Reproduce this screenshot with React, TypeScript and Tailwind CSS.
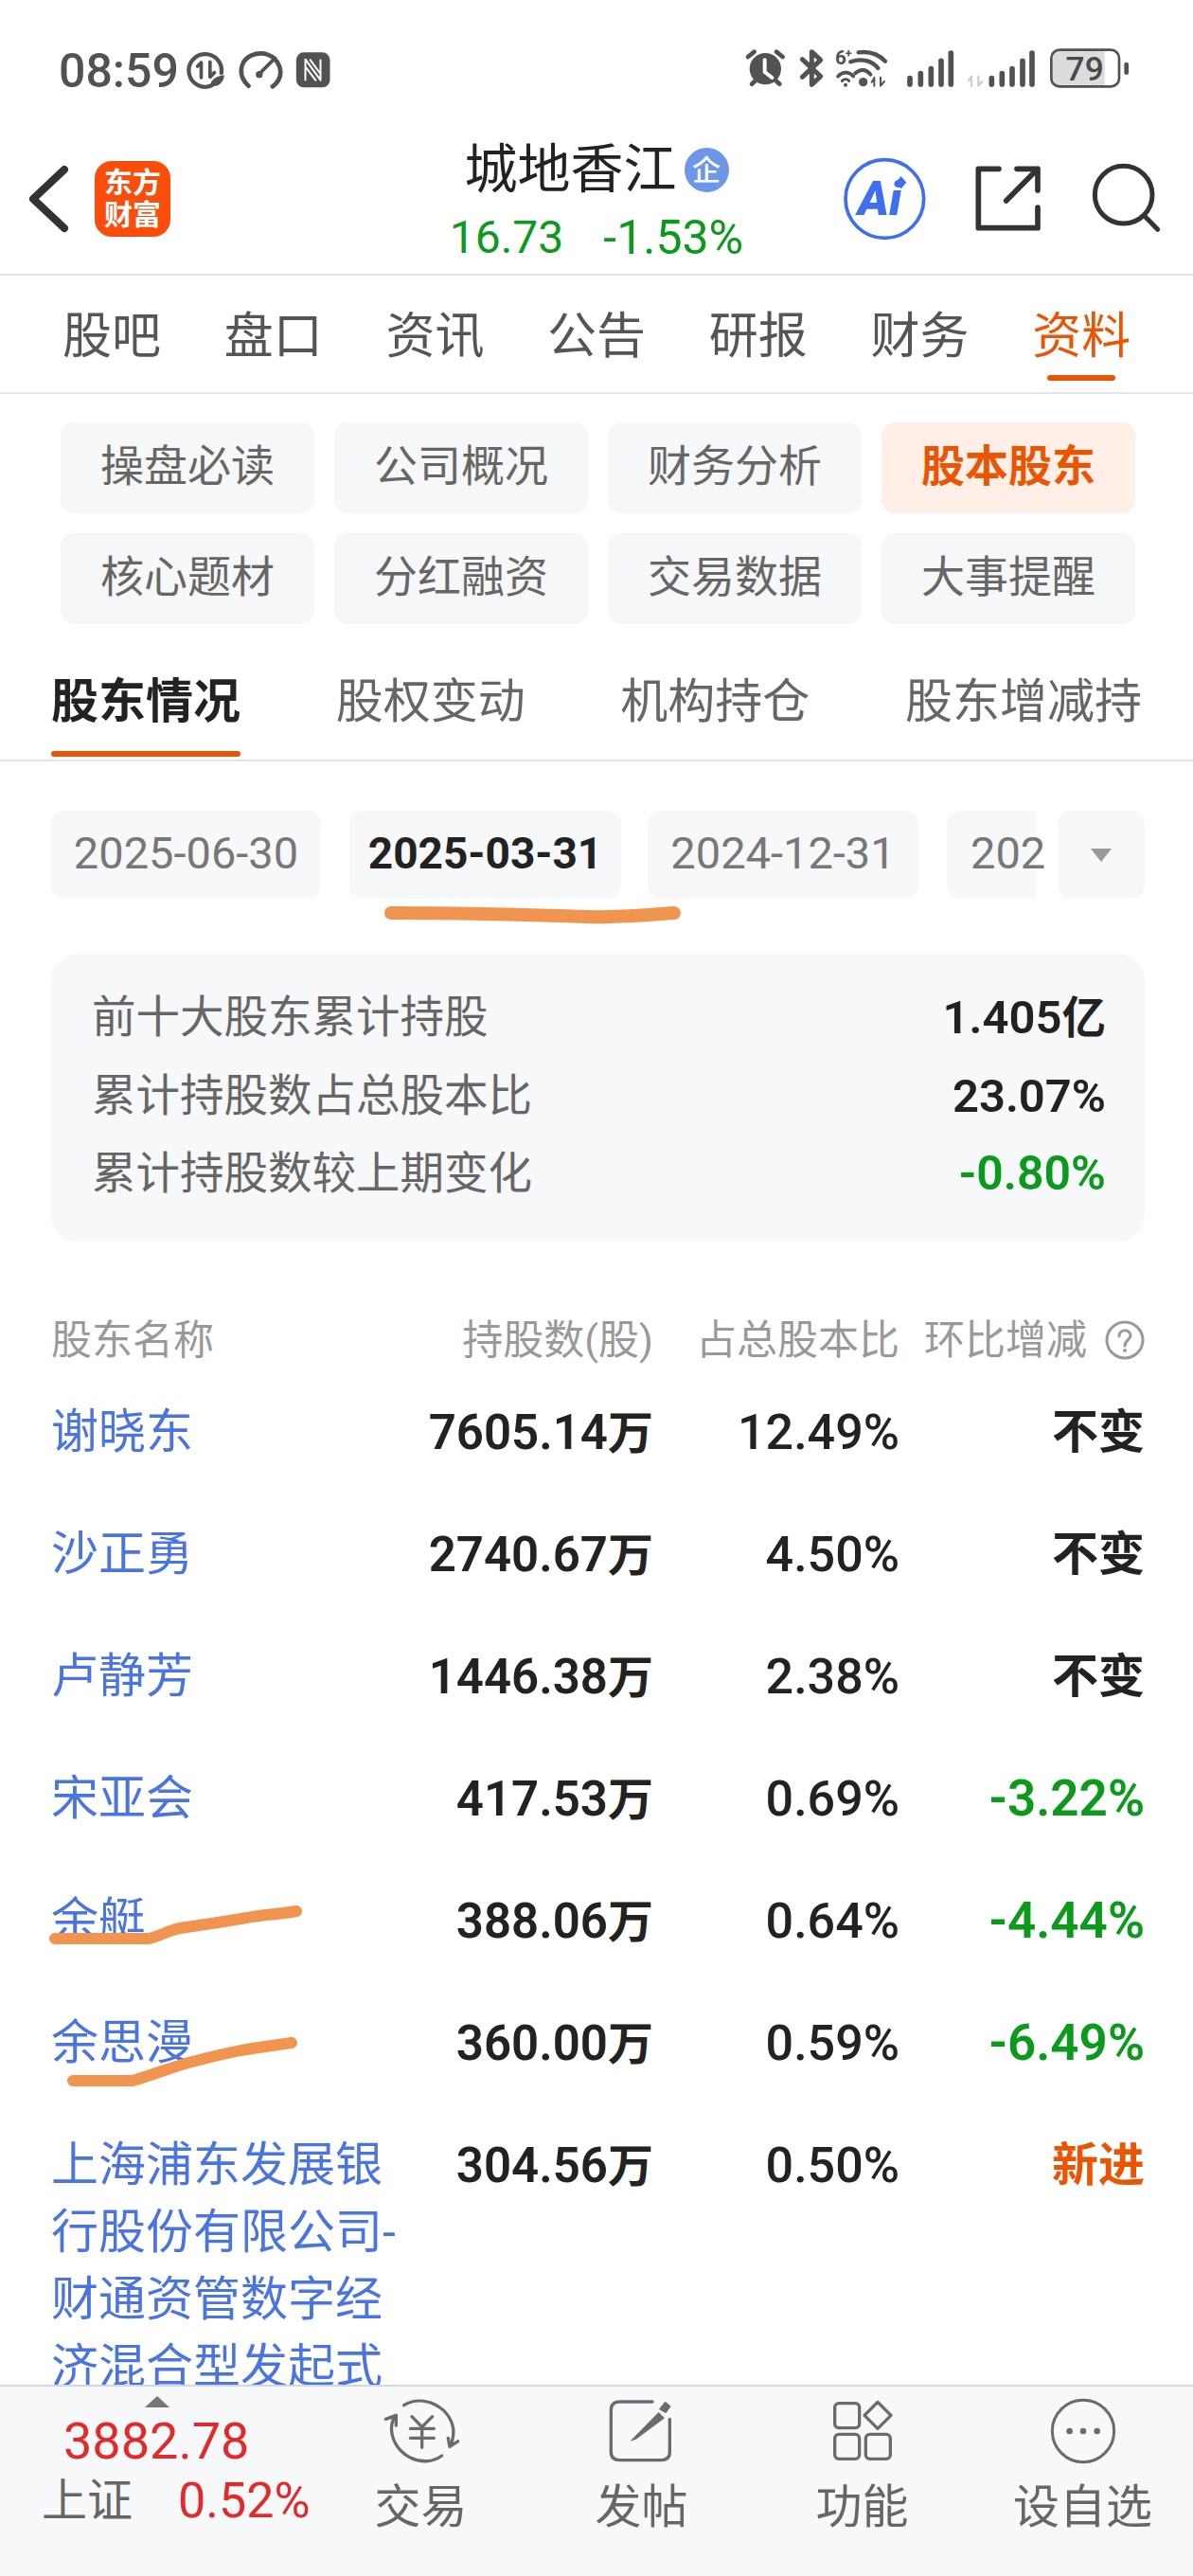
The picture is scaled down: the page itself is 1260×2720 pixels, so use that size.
import React from "react";

const F = "font-['Roboto','Noto_Sans_CJK_SC','Noto_Sans',sans-serif]";

const rows = [
  { n: "谢晓东", v: "7605.14", p: "12.49%", c: "不变", k: "k" },
  { n: "沙正勇", v: "2740.67", p: "4.50%", c: "不变", k: "k" },
  { n: "卢静芳", v: "1446.38", p: "2.38%", c: "不变", k: "k" },
  { n: "宋亚会", v: "417.53", p: "0.69%", c: "-3.22%", k: "g" },
  { n: "余艇", v: "388.06", p: "0.64%", c: "-4.44%", k: "g" },
  { n: "余思漫", v: "360.00", p: "0.59%", c: "-6.49%", k: "g" },
  { n: "上海浦东发展银行股份有限公司-财通资管数字经济混合型发起式", v: "304.56", p: "0.50%", c: "新进", k: "o" },
];

function Row({ r }: { r: (typeof rows)[number] }) {
  const isCjk = r.k !== "g";
  return (
    <div className="flex items-start py-[28.5px] leading-[71px]">
      <div className="w-[385px] shrink-0 text-[50px] text-[#4a74e0]">{r.n}</div>
      <div className="w-[251px] shrink-0 text-right text-[51px] font-semibold text-[#222]">
        {r.v}
        <span className="text-[48px]">万</span>
      </div>
      <div className="w-[260px] shrink-0 text-right text-[52px] font-medium text-[#222]">{r.p}</div>
      <div
        className={`w-[259px] shrink-0 text-right font-semibold ${isCjk ? "text-[49px]" : "text-[53px]"} ${
          r.k === "g" ? "text-[#0b9a1c]" : r.k === "o" ? "text-[#ea5504]" : "text-[#222]"
        }`}
      >
        {r.c}
      </div>
    </div>
  );
}

function StatusLeft() {
  const c = "#525252";
  return (
    <svg className="ml-[6px] mt-[4px]" width="157" height="70" viewBox="430 0 470 210" fill="none" stroke={c} strokeLinecap="round" strokeLinejoin="round">
      {/* data saver */}
      <path d="M515 145A52 52 0 1 1 546 105" strokeWidth="13" />
      <path d="M482 72V120M470 84L482 72M510 70V118L524 104" strokeWidth="11" />
      <path d="M510 148C512 125 530 116 555 112C553 136 538 150 510 148Z" fill={c} stroke="none" />
      {/* gauge */}
      <path d="M632 146C600 118 600 70 640 50C675 35 715 45 730 85C738 110 732 130 708 148" strokeWidth="14" />
      <path d="M664 110L716 58" strokeWidth="11" />
      <circle cx="666" cy="110" r="11" fill={c} stroke="none" />
      {/* NFC */}
      <rect x="783" y="40" width="107" height="111" rx="24" fill={c} stroke="none" />
      <path d="M812 130V62L860 128V62M826 62L860 108M812 85L846 130" stroke="#fff" strokeWidth="6" strokeLinecap="butt" />
    </svg>
  );
}

function StatusRight() {
  const c = "#525252";
  const h1 = [120, 105, 90, 65, 40];
  return (
    <svg width="440" height="70" viewBox="0 0 1320 210" fill="none" stroke={c} strokeLinecap="round" strokeLinejoin="round">
      {/* alarm */}
      <circle cx="115" cy="98" r="50" fill={c} stroke="none" />
      <path d="M113 70V108L136 126" stroke="#fff" strokeWidth="12" />
      <path d="M60 60L80 44M170 60L150 44M72 146L84 135M160 146L148 135" strokeWidth="14" />
      {/* bluetooth */}
      <path d="M232 68L290 122L262 148V44L290 70L232 124" strokeWidth="15" />
      {/* wifi 6+ */}
      <text x="336" y="84" fontSize="62" fontWeight="700" fill={c} stroke="none" fontFamily="Roboto, sans-serif">6</text>
      <text x="368" y="62" fontSize="38" fontWeight="700" fill={c} stroke="none" fontFamily="Roboto, sans-serif">+</text>
      <path d="M410 46C440 42 472 50 495 74" strokeWidth="13" />
      <path d="M385 76C420 62 455 74 472 96" strokeWidth="13" />
      <path d="M345 122C360 106 380 106 394 122" strokeWidth="11" />
      <path d="M358 136C364 130 374 130 380 136" strokeWidth="9" />
      <circle cx="369" cy="149" r="6" fill={c} stroke="none" />
      <path d="M400 112C418 96 436 100 448 116" strokeWidth="12" />
      <circle cx="425" cy="140" r="14" fill={c} stroke="none" />
      <path d="M460 125V152M452 140L460 128M480 125V152L492 138" strokeWidth="6" />
      {/* signal 1 */}
      {[573, 607, 640, 672, 703].map((x, i) => (
        <path key={x} d={`M${x} ${h1[i] + 8}V147`} strokeWidth="17" />
      ))}
      {/* arrows, light */}
      <path d="M768 122V152M760 134L768 122M790 122V152L802 138" stroke="#cfcfcf" strokeWidth="7" />
      {/* signal 2 */}
      {[832, 865, 897, 930, 960].map((x, i) => (
        <path key={x} d={`M${x} ${h1[i] + 8}V147`} strokeWidth="17" />
      ))}
      {/* battery */}
      <path d="M1045 41H1190V151H1045A22 22 0 0 1 1023 129V63A22 22 0 0 1 1045 41Z" fill="#dcdcdc" stroke="none" />
      <rect x="1021" y="38" width="215" height="116" rx="26" strokeWidth="8" />
      <text x="1127" y="134" textAnchor="middle" fontSize="106" fontWeight="500" fill="#4a4a4a" stroke="none" fontFamily="Roboto, sans-serif">79</text>
      <path d="M1259 84V110" strokeWidth="14" />
    </svg>
  );
}

function HeaderRight() {
  const c = "#333";
  return (
    <svg width="370" height="110" viewBox="0 0 1110 330" fill="none" stroke={c} strokeLinecap="round" strokeLinejoin="round">
      <circle cx="193" cy="180" r="124" stroke="#3f6ff0" strokeWidth="11" />
      <text x="108" y="230" fontSize="150" fontWeight="900" fontStyle="italic" fill="#3f6ff0" stroke="none" fontFamily="Roboto, sans-serif">Ai</text>
      <path d="M245 108L262 128L245 148L228 128Z" fill="#3f6ff0" stroke="none" />
      <path d="M555 85H490V272H678V207" strokeWidth="17" />
      <path d="M578 186L678 85M612 85H678V153" strokeWidth="17" />
      <circle cx="950" cy="167" r="91" strokeWidth="15" />
      <path d="M1017 235L1058 277" strokeWidth="15" />
    </svg>
  );
}

const ic = "#6b6b6b";
function IconTrade() {
  return (
    <svg width="80" height="80" viewBox="0 0 240 240" fill="none" stroke={ic} strokeWidth="10" strokeLinecap="round" strokeLinejoin="round">
      <g transform="translate(-45,-18)">
        <path d="M110 56C170 20 255 60 266 130C268 150 264 170 256 186" />
        <path d="M282 170L255 187L250 160" />
        <path d="M230 216C170 260 80 215 71 140C69 122 72 105 82 90" />
        <path d="M52 100L85 88L85 120" />
        <path d="M135 92L167 125L200 92M130 130H205M130 160H205M167 125V190" />
      </g>
    </svg>
  );
}
function IconPost() {
  return (
    <svg width="80" height="80" viewBox="0 0 240 240" fill="none" stroke={ic} strokeWidth="10" strokeLinecap="round" strokeLinejoin="round">
      <g transform="translate(-750,-18)">
        <path d="M903 45H800Q772 45 772 72V205Q772 230 800 230H930Q958 230 958 205V100" />
        <path d="M832 170L923 78L942 97L851 164Z" fill={ic} stroke="none" />
        <path d="M928 68L944 48L958 60L945 78Z" fill={ic} stroke={ic} strokeWidth="6" />
      </g>
    </svg>
  );
}
function IconApps() {
  return (
    <svg width="80" height="80" viewBox="0 0 240 240" fill="none" stroke={ic} strokeWidth="10" strokeLinecap="round" strokeLinejoin="round">
      <g transform="translate(-60,-18)">
        <rect x="92" y="50" width="78" height="78" rx="13" />
        <rect x="92" y="148" width="78" height="78" rx="13" />
        <rect x="190" y="148" width="78" height="78" rx="13" />
        <path d="M228 46L270 88L228 130L186 88Z" />
      </g>
    </svg>
  );
}
function IconMore() {
  return (
    <svg width="80" height="80" viewBox="0 0 240 240" fill="none" stroke={ic} strokeWidth="9">
      <circle cx="120" cy="120" r="98" />
      <circle cx="77" cy="120" r="10" fill={ic} stroke="none" />
      <circle cx="120" cy="120" r="10" fill={ic} stroke="none" />
      <circle cx="164" cy="120" r="10" fill={ic} stroke="none" />
    </svg>
  );
}

function FootItem({ label, children }: { label: string; children: React.ReactNode }) {
  return (
    <div className="flex w-[233px] flex-col items-center pt-[7px]">
      {children}
      <div className="mt-[6px] text-[49px] leading-[70px] text-[#666]">{label}</div>
    </div>
  );
}

export default function App() {
  return (
    <div className={`relative flex h-[2720px] w-[1260px] flex-col overflow-hidden bg-white ${F}`}>
      {/* status bar */}
      <div className="flex h-[135px] shrink-0 items-start justify-between pt-[38px]">
        <div className="flex items-center pl-[62px]">
          <span className="text-[50px] font-medium leading-[70px] text-[#525252]">08:59</span>
          <StatusLeft />
        </div>
        <div className="pr-[50px] pt-[2px]">
          <StatusRight />
        </div>
      </div>
      {/* header */}
      <div className="flex h-[156px] shrink-0 border-b-2 border-[#e3e5e8]">
        <div className="w-[390px] shrink-0 pt-[35px]">
          <div className="flex items-center pl-[30px]">
            <svg width="46" height="72" viewBox="0 0 46 72" fill="none" stroke="#333" strokeWidth="8" strokeLinecap="round" strokeLinejoin="round">
              <path d="M38 5L5 36L38 67" />
            </svg>
            <div className="ml-[24px] flex h-[80px] w-[80px] flex-col items-center justify-center rounded-[18px] bg-[#f94e0b] text-[30px] font-bold leading-[34px] text-white">
              <span>东方</span>
              <span>财富</span>
            </div>
          </div>
        </div>
        <div className="flex min-w-0 flex-1 flex-col items-center">
          <div className="flex items-center gap-[8px] pt-[9px]">
            <span className="text-[56px] leading-[70px] text-[#222]">城地香江</span>
            <span className="flex h-[47px] w-[47px] items-center justify-center rounded-full bg-[#6e97e8] text-[30px] font-medium text-white">企</span>
          </div>
          <div className="mt-[7px] flex items-center gap-[42px] text-[48px] leading-[60px] text-[#0b9a1c]">
            <span>16.73</span>
            <span className="text-[50px]">-1.53%</span>
          </div>
        </div>
        <div className="w-[390px] shrink-0 pt-[15px]">
          <HeaderRight />
        </div>
      </div>
      {/* tabs */}
      <div className="flex h-[125px] shrink-0 items-start gap-[66.7px] border-b-2 border-[#e3e5e8] pl-[66px] pt-[30px] text-[52px] text-[#555]">
        {["股吧", "盘口", "资讯", "公告", "研报", "财务", "资料"].map((t, i) => (
          <div key={t} className="flex flex-col items-center">
            <span className={`leading-[70px] ${i === 6 ? "text-[#ea5504]" : ""}`}>{t}</span>
            {i === 6 && <span className="mt-[5px] h-[6px] w-[72px] rounded-full bg-[#ea5504]" />}
          </div>
        ))}
      </div>
      {/* chips */}
      <div className="grid shrink-0 grid-cols-4 gap-x-[21px] gap-y-[21px] pl-[64px] pr-[61px] pt-[30px]">
        {["操盘必读", "公司概况", "财务分析", "股本股东", "核心题材", "分红融资", "交易数据", "大事提醒"].map((t) => (
          <div
            key={t}
            className={`flex h-[96px] items-center justify-center rounded-[14px] pb-[4px] text-[46px] ${
              t === "股本股东" ? "bg-[#ffefe6] font-bold text-[#ea5504]" : "bg-[#f6f7f9] text-[#666]"
            }`}
          >
            {t}
          </div>
        ))}
      </div>
      {/* section tabs */}
      <div className="mt-[47px] flex h-[98px] shrink-0 items-start justify-between border-b-2 border-[#e3e5e8] px-[54px] text-[50px] text-[#666]">
        {["股东情况", "股权变动", "机构持仓", "股东增减持"].map((t, i) => (
          <div key={t} className="flex flex-col">
            <span className={`leading-[70px] ${i === 0 ? "font-bold text-[#222]" : ""}`}>{t}</span>
            {i === 0 && <span className="mt-[17px] h-[6px] rounded-full bg-[#ea5504]" />}
          </div>
        ))}
      </div>
      {/* dates */}
      <div className="mt-[52px] flex shrink-0 pl-[54px] text-[47px] text-[#777]">
        <div className="flex h-[93px] w-[285px] items-center justify-center rounded-[14px] bg-[#f7f8fa] pb-[2px]">2025-06-30</div>
        <div className="ml-[30px] flex h-[93px] w-[287px] items-center justify-center rounded-[14px] bg-[#f7f8fa] pb-[2px] text-[46px] font-bold text-[#222]">2025-03-31</div>
        <div className="ml-[28px] flex h-[93px] w-[286px] items-center justify-center rounded-[14px] bg-[#f7f8fa] pb-[2px]">2024-12-31</div>
        <div className="ml-[30px] flex h-[93px] w-[94px] items-center rounded-l-[14px] bg-[#f7f8fa] pb-[2px] pl-[25px]">202</div>
        <div className="ml-[23px] flex h-[93px] w-[92px] items-center justify-center rounded-[14px] bg-[#f7f8fa]">
          <svg width="24" height="16" viewBox="0 0 24 16"><path d="M1 1H23L12 15Z" fill="#999" /></svg>
        </div>
      </div>
      {/* card */}
      <div className="ml-[54px] mr-[51px] mt-[58px] flex h-[304px] shrink-0 flex-col justify-center gap-[13px] rounded-[28px] bg-[#f7f8fa] pb-[4px] pl-[43px] pr-[41px] text-[46.5px] leading-[69px] text-[#666]">
        <div className="flex justify-between">
          <span>前十大股东累计持股</span>
          <span className="font-semibold text-[#222]"><span className="text-[49px]">1.405</span>亿</span>
        </div>
        <div className="flex justify-between">
          <span>累计持股数占总股本比</span>
          <span className="text-[49px] font-semibold text-[#222]">23.07%</span>
        </div>
        <div className="flex justify-between">
          <span>累计持股数较上期变化</span>
          <span className="text-[50px] font-semibold text-[#0b9a1c]">-0.80%</span>
        </div>
      </div>
      {/* table */}
      <div className="min-h-0 flex-1 overflow-hidden px-[54px] pt-[74px]">
        <div className="mb-[3px] flex h-[60px] items-center text-[43px] text-[#999]">
          <div className="w-[384px] shrink-0">股东名称</div>
          <div className="w-[252px] shrink-0 text-right">持股数(股)</div>
          <div className="w-[260px] shrink-0 text-right">占总股本比</div>
          <div className="flex w-[259px] shrink-0 items-center justify-end gap-[19px]">
            <span>环比增减</span>
            <svg width="42" height="42" viewBox="0 0 42 42" fill="none" stroke="#999" strokeWidth="3">
              <circle cx="21" cy="21" r="19" />
              <path d="M15 17C15 9 27 9 27 16C27 21 21 21 21 27" strokeLinecap="round" />
              <circle cx="21" cy="32" r="2" fill="#999" stroke="none" />
            </svg>
          </div>
        </div>
        {rows.map((r) => (
          <Row key={r.n} r={r} />
        ))}
      </div>
      {/* footer */}
      <div className="flex h-[202px] shrink-0 border-t-2 border-[#d5d7de] bg-[#f7f8fa]">
        <div className="flex w-[328px] shrink-0 flex-col pl-[44px] pt-[10px]">
          <div className="ml-[109px] h-0 w-0 border-x-[13px] border-b-[12px] border-x-transparent border-b-[#777]" />
          <div className="ml-[23px] mt-[1px] text-[54px] leading-[70px] text-[#e12b2b]">3882.78</div>
          <div className="-mt-[7px] flex items-center gap-[48px] leading-[70px]">
            <span className="text-[48px] text-[#666]">上证</span>
            <span className="text-[52px] text-[#e12b2b]">0.52%</span>
          </div>
        </div>
        <FootItem label="交易"><IconTrade /></FootItem>
        <FootItem label="发帖"><IconPost /></FootItem>
        <FootItem label="功能"><IconApps /></FootItem>
        <FootItem label="设自选"><IconMore /></FootItem>
      </div>
      {/* hand-drawn marker strokes over the screenshot */}
      <svg className="absolute left-0 top-0" width="1260" height="2720" viewBox="0 0 1260 2720" fill="none" stroke="#f09450" strokeLinecap="round" strokeLinejoin="round" strokeWidth="12">
        <path d="M413 964C480 964 560 966 620 968C650 969 680 966 712 964" strokeWidth="14" />
        <path d="M58 2047L157 2047C170 2044 178 2038 190 2036L230 2030C250 2027 265 2024 280 2022C292 2021 302 2020 313 2018" />
        <path d="M77 2197L140 2197C165 2190 185 2181 207 2176C230 2170 250 2165 273 2162L308 2157" />
      </svg>
    </div>
  );
}
